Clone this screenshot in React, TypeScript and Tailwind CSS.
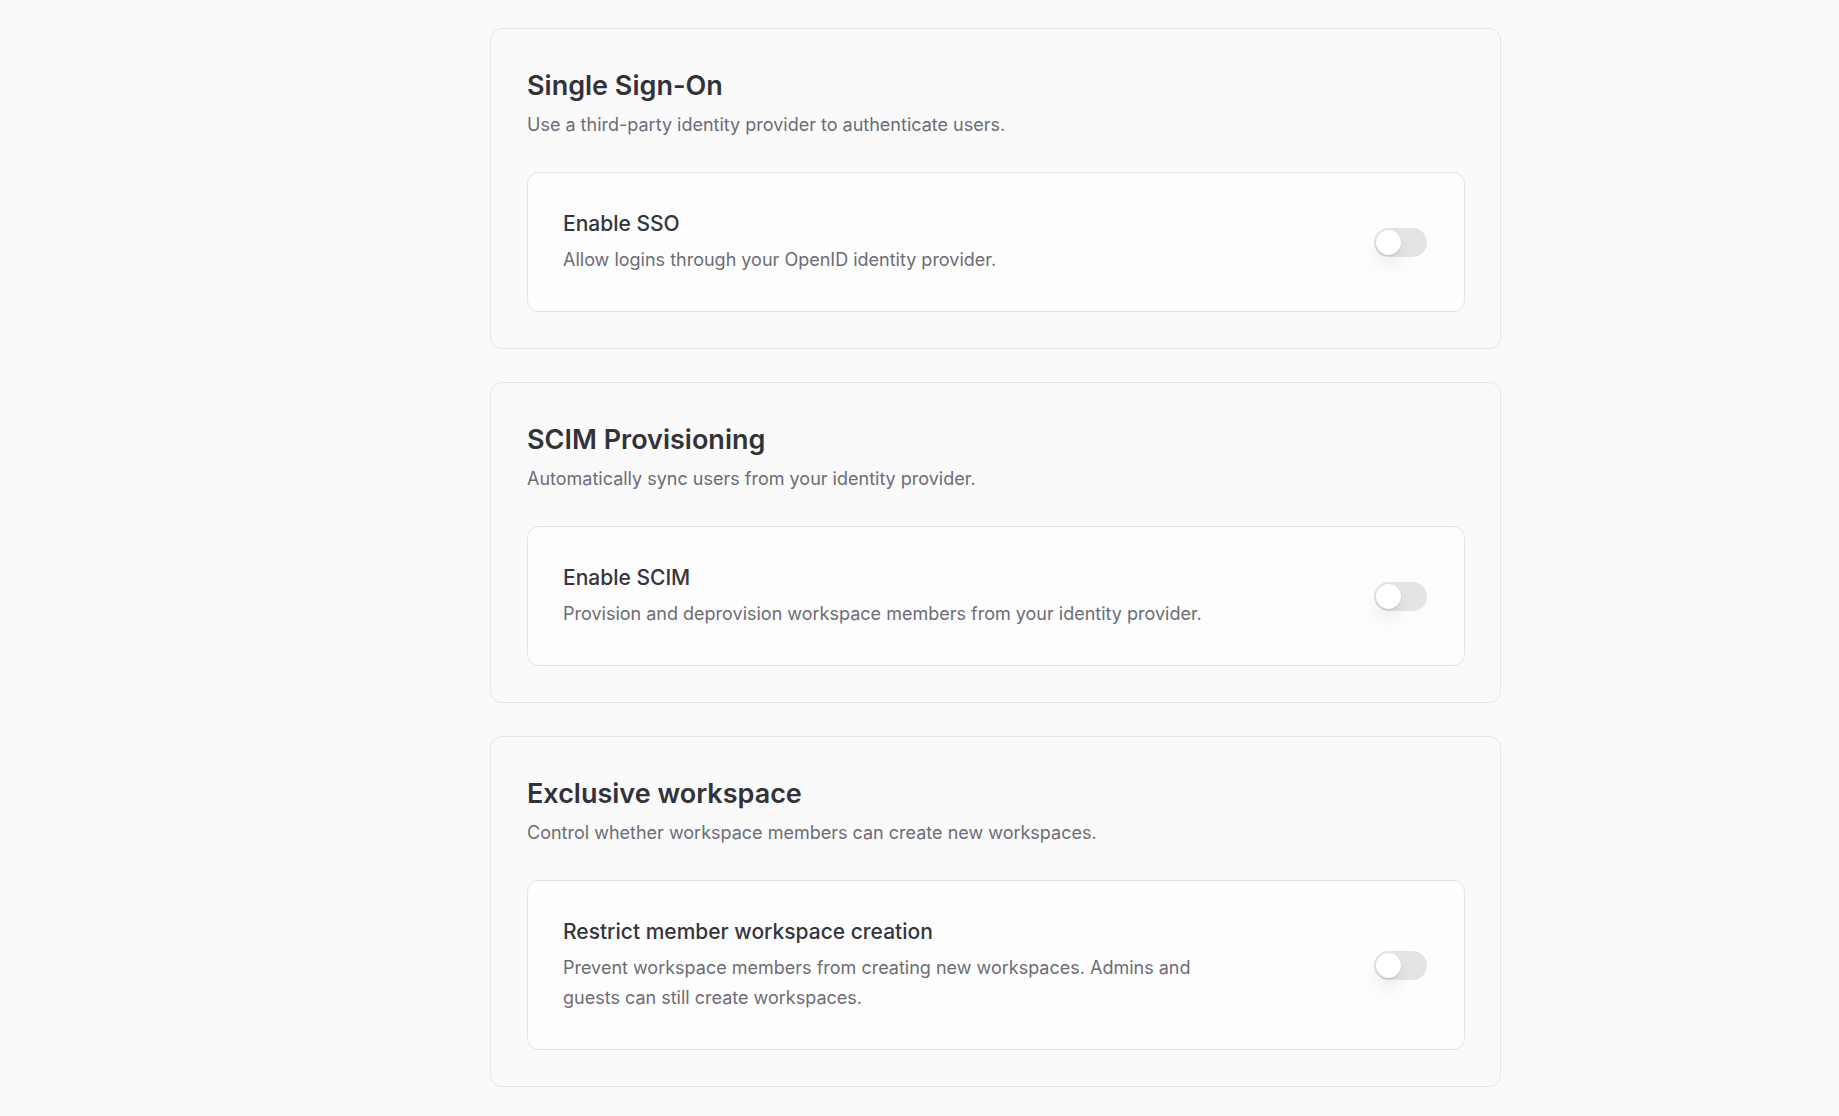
import React, { useState } from 'react';

type Section = {
  title: string;
  description: string;
  settingTitle: string;
  settingDescription: string;
};

const sections: Section[] = [
  {
    title: 'Single Sign-On',
    description: 'Use a third-party identity provider to authenticate users.',
    settingTitle: 'Enable SSO',
    settingDescription: 'Allow logins through your OpenID identity provider.',
  },
  {
    title: 'SCIM Provisioning',
    description: 'Automatically sync users from your identity provider.',
    settingTitle: 'Enable SCIM',
    settingDescription: 'Provision and deprovision workspace members from your identity provider.',
  },
  {
    title: 'Exclusive workspace',
    description: 'Control whether workspace members can create new workspaces.',
    settingTitle: 'Restrict member workspace creation',
    settingDescription:
      'Prevent workspace members from creating new workspaces. Admins and guests can still create workspaces.',
  },
];

const Toggle: React.FC = () => {
  const [on, setOn] = useState(false);
  return (
    <button
      type="button"
      onClick={() => setOn(!on)}
      className={`relative flex h-[29px] w-[53px] shrink-0 items-center rounded-full p-[2px] transition-colors ${
        on ? 'bg-[#3f3f46]' : 'bg-[#e4e4e7]'
      }`}
    >
      <span
        className={`h-[25px] w-[25px] rounded-full bg-white shadow-[0_1px_2px_rgba(0,0,0,0.12),0_10px_16px_rgba(0,0,0,0.07)] transition-transform ${
          on ? 'translate-x-[24px]' : 'translate-x-0'
        }`}
      />
    </button>
  );
};

const SettingsSection: React.FC<{ section: Section }> = ({ section }) => (
  <div className="rounded-xl border border-[#e6e6e8] bg-[#fafafa] pl-9 pr-[35px] pt-[37px] pb-9">
    <h2 className="text-[27px] font-semibold leading-[40px] text-[#323238]">{section.title}</h2>
    <p className="mt-[5px] text-[18px] leading-[28px] text-[#6c6c76]">{section.description}</p>
    <div className="mt-[33px] flex items-center justify-between rounded-xl border border-[#e4e4e7] bg-[#fdfdfd] pt-[37px] pb-[36px] pl-[35px] pr-[37px]">
      <div className="max-w-[650px]">
        <div className="text-[21px] font-medium leading-[28px] text-[#35353b]">{section.settingTitle}</div>
        <p className="mt-[7px] text-[18px] leading-[30px] text-[#6c6c76]">{section.settingDescription}</p>
      </div>
      <Toggle />
    </div>
  </div>
);

export default function App() {
  return (
    <div
      className="min-h-screen bg-[#fafafa] pt-[28px] pl-[490px]"
      style={{ fontFamily: 'Inter, "Noto Sans", sans-serif' }}
    >
      <div className="flex w-[1011px] flex-col gap-[33px] pb-10">
        {sections.map((s) => (
          <SettingsSection key={s.title} section={s} />
        ))}
      </div>
    </div>
  );
}
